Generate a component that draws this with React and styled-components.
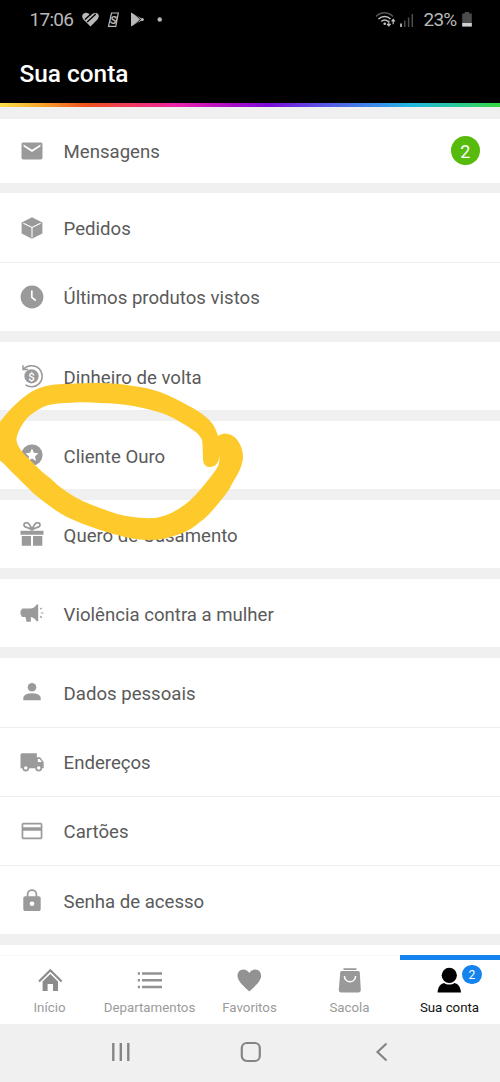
import React from "react";
import styled, { createGlobalStyle } from "styled-components";

const GlobalStyle = createGlobalStyle`
  * {
    box-sizing: border-box;
  }
  body {
    margin: 0;
    background: #f0f0f0;
    font-family: Roboto, "Liberation Sans", sans-serif;
  }
`;

const Screen = styled.div`
  position: relative;
  display: flex;
  flex-direction: column;
  width: 500px;
  height: 1082px;
  overflow: hidden;
  background: #f0f0f0;
`;

const StatusBar = styled.div`
  display: flex;
  align-items: center;
  justify-content: space-between;
  height: 40px;
  padding: 0 28.5px 0 29.5px;
  background: #000;
  color: #b9b9b9;
  font-size: 19px;
  flex-shrink: 0;
`;

const StatusGroup = styled.div`
  display: flex;
  align-items: center;
  height: 40px;
`;

const StatusText = styled.span`
  width: ${(props) => props.$width};
  padding-bottom: 1px;
  white-space: nowrap;
  letter-spacing: ${(props) => props.$spacing || "0"};
`;

const Header = styled.header`
  display: flex;
  align-items: center;
  height: 62.5px;
  padding: 5.5px 20px 0 19.5px;
  background: #000;
  flex-shrink: 0;
`;

const Title = styled.h1`
  margin: 0;
  color: #fff;
  font-size: 24.4px;
  font-weight: 500;
  line-height: 30px;
`;

const RainbowLine = styled.div`
  height: 4px;
  flex-shrink: 0;
  background: linear-gradient(
    90deg,
    #fbe14b 0%,
    #f7a62c 8%,
    #f0521c 17%,
    #ef3b5e 26%,
    #ea22ab 36%,
    #a50ccb 47%,
    #7a0fd6 54%,
    #5b52e6 64%,
    #3f86ea 74%,
    #1fb6e4 82%,
    #2ac79b 91%,
    #35d83f 100%
  );
`;

const List = styled.main`
  display: flex;
  flex-direction: column;
  gap: 10.8px;
  height: 848px;
  padding-top: 12px;
  overflow: hidden;
  flex-shrink: 0;
`;

const Group = styled.section`
  display: flex;
  flex-direction: column;
  background: #fff;
  flex-shrink: 0;
`;

const Row = styled.div`
  display: flex;
  align-items: center;
  height: ${(props) => props.$height || "68.3px"};
  padding: 0 20px 0 19.6px;
  color: #5a5a5a;
  font-size: 18.6px;

  & + & {
    height: 69.3px;
    border-top: 1px solid #efefef;
  }

  svg {
    flex-shrink: 0;
    margin-right: 20px;
  }
`;

const RowLabel = styled.span`
  flex: 1;
  padding-top: 3px;
  line-height: 24px;
  white-space: nowrap;
`;

const CountBadge = styled.span`
  display: flex;
  align-items: center;
  justify-content: center;
  width: 29.5px;
  height: 29.5px;
  padding-top: 1px;
  border-radius: 50%;
  background: #56bb0c;
  color: #fff;
  font-size: 18px;
`;

const TabBar = styled.nav`
  display: flex;
  height: 69.5px;
  background: #fff;
  flex-shrink: 0;
`;

const Tab = styled.div`
  display: flex;
  flex-direction: column;
  align-items: center;
  width: 100px;
  padding-top: ${(props) => (props.$active ? "6px" : "10px")};
  border-top: ${(props) =>
    props.$active ? "5px solid #1583ee" : "1px solid #f8f8f8"};
  color: ${(props) => (props.$active ? "#111" : "#9b9b9b")};
  font-size: 13.3px;
`;

const TabIcon = styled.div`
  position: relative;
  display: flex;
  height: 28px;
`;

const TabBadge = styled.span`
  position: absolute;
  top: -1px;
  left: 25px;
  display: flex;
  align-items: center;
  justify-content: center;
  width: 19.5px;
  height: 19.5px;
  padding-top: 1px;
  border-radius: 50%;
  background: #1583ee;
  color: #fff;
  font-size: 12px;
`;

const TabLabel = styled.span`
  margin-top: 6px;
  margin-right: 1px;
  line-height: 16px;
  white-space: nowrap;
`;

const SystemBar = styled.footer`
  display: flex;
  align-items: center;
  justify-content: space-between;
  height: 56px;
  padding: 0 104px 0 105px;
  flex-shrink: 0;
`;

// Hand-drawn ring lying over the list
const Highlight = styled.svg`
  position: absolute;
  top: 370px;
  left: 0;
  pointer-events: none;
`;

const Icon = ({ size = 24, children }) => (
  <svg width={size} height={size} viewBox="0 0 24 24" fill="#9a9a9a">
    {children}
  </svg>
);

const icons = {
  mail: (
    <path
      fillRule="evenodd"
      d="M3.2 3.5h17.6c1 0 1.7.7 1.7 1.7v13.6c0 1-.7 1.7-1.7 1.7H3.2c-1 0-1.7-.7-1.7-1.7V5.200c0-1 .7-1.700 1.700-1.700zM3.600 5.600v2l8.400 5.400 8.400-5.400v-2L12 10.800z"
    />
  ),
  box: (
    <>
      <path d="M12 1.200 22.400 6.400v11.200L12 22.800 1.600 17.600V6.400z" />
      <path
        d="M3.400 7.300 12 11.500l8.600-4.200M12 11.500v10"
        fill="none"
        stroke="#fff"
        strokeWidth="1.1"
      />
    </>
  ),
  clock: (
    <>
      <circle cx="12" cy="12" r="11.400" />
      <path
        d="M11.800 5.500v6.800l4 3.200"
        fill="none"
        stroke="#fff"
        strokeWidth="1.700"
      />
    </>
  ),
  cashback: (
    <>
      <circle cx="11.500" cy="12.300" r="7.100" />
      <path
        d="M3 5.200C7.500.9 15 .4 19.200 4.700c4 4.200 4 11-.1 14.900-4 3.900-9.600 3.900-13.600 1.200M3 1.200v4.200h5.200"
        fill="none"
        stroke="#9a9a9a"
        strokeWidth="1.500"
      />
      <text
        x="11.500"
        y="16.500"
        fill="#fff"
        fontSize="11.500"
        fontWeight="500"
        textAnchor="middle"
      >
        $
      </text>
    </>
  ),
  star: (
    <>
      <circle cx="12" cy="12" r="10.600" />
      <path
        d="m12 5.600 1.900 4.200 4.500.5-3.400 3.100 1 4.500-4-2.300-4 2.300 1-4.500-3.400-3.100 4.500-.5z"
        fill="#fff"
      />
    </>
  ),
  gift: (
    <>
      <path d="M.5 8.800h23v4H.5zM1.800 14h9.200v9.800H1.800zM13 14h9.300v9.800H13z" />
      <path
        d="M12 7.800C10.500 3.500 8.500.6 6.200.7 3.900.8 3.300 3.500 5 4.800c1.500 1.100 4.600.7 7 3.200 2.400-2.500 5.500-2.100 7-3.200 1.700-1.300 1.100-4-1.200-4.100C15.500.6 13.500 3.500 12 7.800z"
        fill="none"
        stroke="#9a9a9a"
        strokeWidth="1.800"
      />
    </>
  ),
  megaphone: (
    <>
      <path d="M3.200 7.500h7.200c2.500 0 4.600-1.600 6.200-4.100h1.600v16.800h-1.600c-1.500-2.500-3.600-4-5.800-4.200v4.700H6.500L5.500 16H3.200c-1 0-1.700-.5-1.900-1.500L.5 13v-3l.9-1.200c.2-.8.8-1.300 1.800-1.300z" />
      <path
        d="m20.100 8.300 1.800-1.400M20.900 12h2.600m-3.400 3.300 1.900 1.500"
        fill="none"
        stroke="#9a9a9a"
        strokeWidth="1.200"
      />
    </>
  ),
  person: (
    <>
      <circle cx="12" cy="7.300" r="4.300" />
      <path d="M3.300 20.200v-2.300c0-3.400 5-4.600 8.700-4.600s8.700 1.200 8.700 4.600v2.300z" />
    </>
  ),
  truck: (
    <>
      <path d="M2.200 3.300h14.600v3.900h3.300l3.600 4.800v6.300H.5V5c0-1 .7-1.700 1.700-1.700z" />
      <path d="M17.800 8.900h1.900l2.200 3h-4.100z" fill="#fff" />
      <g fill="#fff" stroke="#9a9a9a" strokeWidth="1.700">
        <circle cx="5.800" cy="18" r="2.600" />
        <circle cx="18.700" cy="18" r="2.600" />
      </g>
    </>
  ),
  card: (
    <path
      fillRule="evenodd"
      d="M3.500 3.800h17c1 0 1.900.8 1.900 1.900v12.700c0 1-.8 1.800-1.900 1.800h-17c-1 0-1.900-.8-1.900-1.800V5.700c0-1.100.8-1.900 1.900-1.900zM3.300 5.500v2.700h17.400V5.500zm0 6.300v6.700h17.400v-6.700z"
    />
  ),
  lock: (
    <>
      <path d="M5.200 8.300h13.600c1.100 0 1.900.8 1.900 1.900v11c0 1.100-.8 1.900-1.900 1.900H5.200c-1.100 0-1.900-.8-1.900-1.900v-11c0-1.100.8-1.900 1.900-1.900z" />
      <path
        d="M7.600 9V6.300c0-5.600 8.800-5.600 8.800 0V9"
        fill="none"
        stroke="#9a9a9a"
        strokeWidth="1.800"
      />
      <circle cx="12" cy="15.700" r="2.300" fill="#fff" />
    </>
  ),
};

const groups = [
  [{ icon: "mail", label: "Mensagens", count: 2, height: "64.2px" }],
  [
    { icon: "box", label: "Pedidos" },
    { icon: "clock", label: "Últimos produtos vistos" },
  ],
  [{ icon: "cashback", label: "Dinheiro de volta" }],
  [{ icon: "star", label: "Cliente Ouro" }],
  [{ icon: "gift", label: "Quero de Casamento" }],
  [{ icon: "megaphone", label: "Violência contra a mulher" }],
  [
    { icon: "person", label: "Dados pessoais" },
    { icon: "truck", label: "Endereços" },
    { icon: "card", label: "Cartões" },
    { icon: "lock", label: "Senha de acesso" },
  ],
];

const tabs = [
  {
    label: "Início",
    icon: (
      <svg width="26" height="28" viewBox="0 0 26 28" fill="#8c8c8c">
        <path
          d="M2 15.500 13.300 4.300l11.300 11.200"
          fill="none"
          stroke="#8c8c8c"
          strokeWidth="2.200"
        />
        <path d="m13.300 8 7.700 7.500V25h-5v-7h-5.400v7h-5v-9.500z" />
      </svg>
    ),
  },
  {
    label: "Departamentos",
    icon: (
      <svg width="26" height="28" viewBox="0 0 26 28">
        <g stroke="#929292" strokeWidth="2.500">
          <path d="M.8 7.500H3M.8 14.300H3M.8 21H3M5 7.500h20M5 14.300h20M5 21h20" />
        </g>
      </svg>
    ),
  },
  {
    label: "Favoritos",
    icon: (
      <svg width="26" height="28" viewBox="0 0 26 28" fill="#929292">
        <path d="M12.300 25.500C8.800 22 .5 16 .5 9.800c0-3.300 2.500-6.200 5.800-6.200 2.500 0 4.700 1.200 6 3.400 1.300-2.200 3.500-3.400 6-3.400 3.300 0 5.800 2.900 5.800 6.200 0 6.200-8.300 12.200-11.800 15.700z" />
      </svg>
    ),
  },
  {
    label: "Sacola",
    icon: (
      <svg width="26" height="28" viewBox="0 0 26 28" fill="#999">
        <path d="M6.500 2.300h13V4h-13zM5 5h16c1 0 1.700.7 1.800 1.600l1 17.200c.1 1.700-.9 2.700-2.500 2.700h-17c-1.600 0-2.600-1-2.500-2.700L3.200 6.600C3.300 5.700 4 5 5 5z" />
        <path
          d="M7.400 10c.4 7.600 10.800 7.600 11.200 0"
          fill="none"
          stroke="#fff"
          strokeWidth="1.600"
        />
      </svg>
    ),
  },
  {
    label: "Sua conta",
    active: true,
    count: 2,
    icon: (
      <svg width="26" height="28" viewBox="0 0 26 28" fill="#000">
        <circle cx="12.300" cy="9.300" r="7.600" />
        <path d="M.6 26.600c.2-5.500 2.800-9 6.500-9.700 2.900 2 7.500 2 10.400 0 3.700.7 6.300 4.200 6.500 9.700z" />
      </svg>
    ),
  },
];

export default function App() {
  return (
    <Screen>
      <GlobalStyle />
      <StatusBar>
        <StatusGroup>
          <StatusText $width="52.5px" $spacing="-0.7px">
            17:06
          </StatusText>
          <svg width="84" height="20" viewBox="0 0 84 20" fill="#b9b9b9">
            <path d="M8.500 16.500 1.700 9.700C-.7 7-.1 3.400 3 2.900c2.500-.4 4.300 1 5.500 3 1.200-2 3.500-3.400 5.800-2.900 3 .6 3.200 4.100.9 6.700z" />
            <path
              d="m5.200 12 8.600-8M3 9.500l5.200-4.800"
              stroke="#000"
              strokeWidth="1.400"
            />
            <path
              d="M29.500 3h6.800l-2.500 13.300h-7.300zM29 5.200 27.700 13m7.600-7L34 14"
              fill="none"
              stroke="#b9b9b9"
              strokeWidth="1.200"
            />
            <text
              x="31.300"
              y="13.500"
              fontSize="10.500"
              fontWeight="700"
              fontStyle="italic"
              textAnchor="middle"
            >
              S
            </text>
            <path d="M49 2.500 61.500 9.500 49 16.500z" />
            <path
              d="m51.500 3 8 7.500M51.500 16l8-7.500"
              stroke="#000"
              strokeWidth=".9"
            />
            <circle cx="60.300" cy="9.500" r="1.500" />
            <circle cx="77.700" cy="9.500" r="2.200" />
          </svg>
        </StatusGroup>
        <StatusGroup>
          <svg width="49" height="20" viewBox="0 0 49 20" fill="none">
            <path
              d="M1 6.500c4.700-5 12-5 17 0"
              stroke="#555"
              strokeWidth="1.500"
            />
            <path
              d="M3.500 9c3.500-3.300 8.700-3.300 12 0M6.300 11.500c2-1.700 4.700-1.700 6.800 0"
              stroke="#c6c6c6"
              strokeWidth="1.500"
            />
            <circle cx="9.700" cy="13.800" r="1.300" fill="#c6c6c6" />
            <path
              d="M13.800 10.500v5.200m-1.800-1.900 1.800 2 1.800-2M18.200 14.200V9.500m-1.600 1.900 1.600-2 1.600 2"
              stroke="#c6c6c6"
              strokeWidth="1.200"
            />
            <path d="M26 13.500V17" stroke="#c6c6c6" strokeWidth="1.700" />
            <path
              d="M29.800 10.500V17M33.600 7.500V17M37.300 4v13"
              stroke="#4e4e4e"
              strokeWidth="1.500"
            />
          </svg>
          <StatusText $width="38px" $spacing="-0.8px">
            23%
          </StatusText>
          <svg width="10" height="20" viewBox="0 0 10 20">
            <path d="M2.800 2h4.400v1.500h2.600v13H.2v-13h2.600z" fill="#4c4c4c" />
            <path d="M.2 13h9.600v3.500H.2z" fill="#d0d0d0" />
          </svg>
        </StatusGroup>
      </StatusBar>
      <Header>
        <Title>Sua conta</Title>
      </Header>
      <RainbowLine />

      <List>
        {groups.map((rows) => (
          <Group key={rows[0].label}>
            {rows.map((row) => (
              <Row key={row.label} $height={row.height}>
                <Icon>{icons[row.icon]}</Icon>
                <RowLabel>{row.label}</RowLabel>
                {row.count && <CountBadge>{row.count}</CountBadge>}
              </Row>
            ))}
          </Group>
        ))}
        <Group>
          <Row />
        </Group>
      </List>

      <TabBar>
        {tabs.map((tab) => (
          <Tab key={tab.label} $active={tab.active}>
            <TabIcon>
              {tab.icon}
              {tab.count && <TabBadge>{tab.count}</TabBadge>}
            </TabIcon>
            <TabLabel>{tab.label}</TabLabel>
          </Tab>
        ))}
      </TabBar>

      <SystemBar>
        <svg width="32" height="24" viewBox="0 0 32 24">
          <path
            d="M8.300 3v18M15.800 3v18M23.300 3v18"
            stroke="#858585"
            strokeWidth="2.400"
          />
        </svg>
        <svg width="26" height="24" viewBox="0 0 26 24">
          <rect
            x="1.800"
            y="3"
            width="18"
            height="18"
            rx="5"
            fill="none"
            stroke="#858585"
            strokeWidth="2.200"
          />
        </svg>
        <svg width="28" height="24" viewBox="0 0 28 24">
          <path
            d="M18.500 3.500 9.500 12l9 8.500"
            fill="none"
            stroke="#858585"
            strokeWidth="2.200"
          />
        </svg>
      </SystemBar>

      <Highlight width="260" height="180" viewBox="0 370 260 180">
        <path
          fill="#fec92b"
          fillRule="evenodd"
          d="M-2 424C5 416 10 409 17 403C23 397 30 392 37 389C46 385 56 384 67 384C78 383 89 383 100 383C111 383 123 384 133 386C143 387 151 389 160 392C170 396 179 400 187 405C195 409 202 413 207 418C213 423 216 429 218 436C221 434 224 433 227 434C232 434 236 438 238 441C242 447 243 452 243 458C242 467 238 474 233 482C229 491 223 498 217 505C212 511 206 518 200 522C193 528 185 533 177 535C168 538 159 540 150 540C133 540 116 535 100 530C89 526 77 522 67 517C55 511 43 501 33 493C28 488 22 482 17 477C10 471 5 464 -2 459ZM16.500 438C16 444 20 449 24 454C27 457 30 460 33 463C39 469 44 474 50 478C55 483 61 488 67 492C77 499 89 504 100 508C111 512 122 516 133 517C142 518 152 519 160 517C168 515 174 512 180 508C188 503 194 497 200 490C206 483 213 474 217 468C219 465 220 460 219.300 455C219.500 463 215 467 210 467C205 467 202.500 463 203 457C202.500 451 203 445 202 440C200 435 195 431 190 428C183 423 175 419 167 415C157 411 144 408 133 406C122 404 111 403 100 403C89 402 77 402 67 403C58 403 50 404 43 407C37 410 31 414 27 418C22 424 18 431 16.500 438Z"
        />
      </Highlight>
    </Screen>
  );
}
